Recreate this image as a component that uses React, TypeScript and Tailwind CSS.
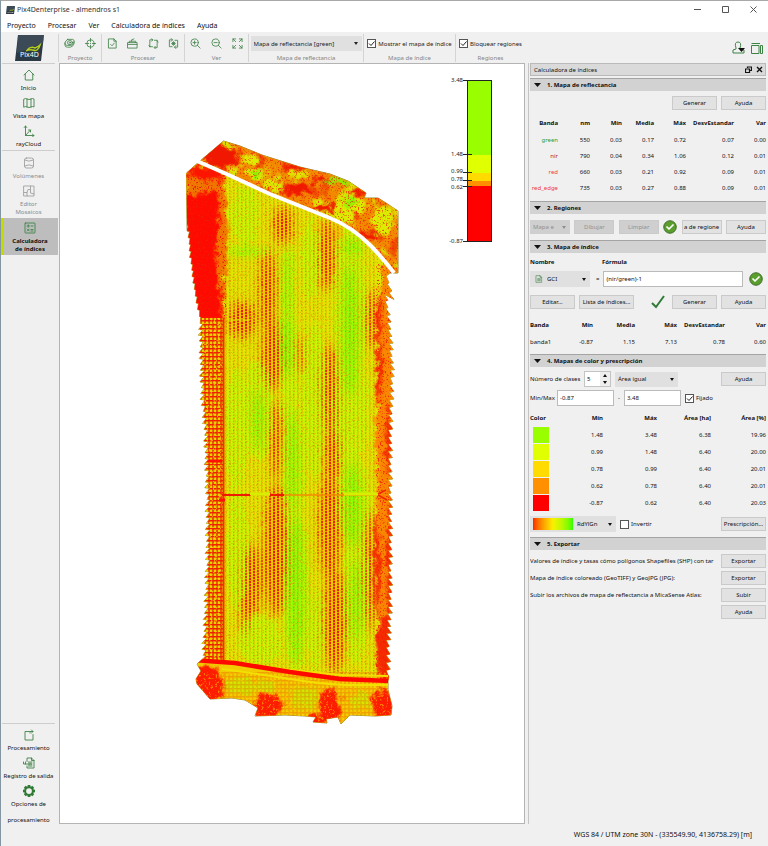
import { useState } from 'react'
import type { ReactNode } from 'react'

type Point = [number, number]

interface BandRow {
  name: string
  color: string
  nm: number
  values: string[]
}

const bands: BandRow[] = [
  { name: 'green', color: 'text-[#2f9a2f]', nm: 550, values: ['0.03', '0.17', '0.72', '0.07', '0.00'] },
  { name: 'nir', color: 'text-[#a8203a]', nm: 790, values: ['0.04', '0.34', '1.06', '0.12', '0.01'] },
  { name: 'red', color: 'text-[#f03838]', nm: 660, values: ['0.03', '0.21', '0.92', '0.09', '0.01'] },
  { name: 'red_edge', color: 'text-[#f03838]', nm: 735, values: ['0.03', '0.27', '0.88', '0.09', '0.01'] },
]

const classes = [
  { swatch: 'bg-[#99ff00]', values: ['1.48', '3.48', '6.38', '19.96'] },
  { swatch: 'bg-[#e0ff00]', values: ['0.99', '1.48', '6.40', '20.00'] },
  { swatch: 'bg-[#ffdb00]', values: ['0.78', '0.99', '6.40', '20.01'] },
  { swatch: 'bg-[#ff9000]', values: ['0.62', '0.78', '6.40', '20.01'] },
  { swatch: 'bg-[#ff0000]', values: ['-0.87', '0.62', '6.40', '20.03'] },
]

const exportsList = [
  { label: 'Valores de índice y tasas cómo polígonos Shapefiles (SHP) con tar', action: 'Exportar' },
  { label: 'Mapa de índice coloreado (GeoTIFF) y GeoJPG (JPG):', action: 'Exportar' },
  { label: 'Subir los archivos de mapa de reflectancia a MicaSense Atlas:', action: 'Subir' },
]

/* ---------- Icons ---------- */

function Icon({ children, className = 'size-3' }: { children: ReactNode; className?: string }) {
  return (
    <svg
      viewBox="0 0 24 24"
      className={`shrink-0 ${className}`}
      fill="none"
      stroke="currentColor"
      strokeWidth="1.800"
      strokeLinejoin="round"
      strokeLinecap="round"
      aria-hidden="true"
    >
      {children}
    </svg>
  )
}

const icons = {
  project: (
    <>
      <path d="M8 3h11q4 1 3 5-1 5-6 8H6q-4-1-4-5 1-5 6-8Z" />
      <path d="M2 11v4q0 5 5 5h7q7-2 8-8V8" />
      <ellipse cx="13" cy="10" rx="5.500" ry="4.500" />
      <circle cx="13" cy="10" r="1.500" />
    </>
  ),
  target: (
    <>
      <circle cx="12" cy="12" r="8" />
      <path d="M12 1v7M12 16v7M1 12h7M16 12h7M12 11.500v1" />
    </>
  ),
  docCheck: (
    <>
      <path d="M4 2h11l5 5v15H4ZM15 2v5h5" />
      <path d="m8 14 3 3 5-6" />
    </>
  ),
  basket: (
    <>
      <path d="M2 10h20v12H2ZM2 14h20" />
      <path d="M5 10V7h14v3M10 7V4l5-2" />
    </>
  ),
  cycle: (
    <>
      <path d="M9 4H4v15M15 21h5V6M4 19l-2-3M4 19h6M20 6l2 3M20 5h-6" />
      <path d="m8 2 3 2-3 3M16 18l-3 3 3 2" />
    </>
  ),
  cyclePlus: (
    <>
      <path d="M9 4H3v15h6M15 20h6V5h-6" />
      <path d="m7 1 3 3-3 3M17 17l-3 3 3 3M12 8v8M8 12h8M9 9l6 6M15 9l-6 6" />
    </>
  ),
  zoomIn: (
    <>
      <circle cx="10" cy="10" r="8" />
      <path d="m16 16 6 6M10 6.500v7M6.500 10h7" />
    </>
  ),
  zoomOut: (
    <>
      <circle cx="10" cy="10" r="8" />
      <path d="m16 16 6 6M6.500 10h7" />
    </>
  ),
  fit: <path d="M2 8V2h6M2 2l6 6M16 2h6v6M22 2l-6 6M2 16v6h6M2 22l6-6M22 16v6h-6M22 22l-6-6" />,
  home: <path d="m2 12 10-10 10 10M4.500 10v12h15V10" />,
  map: <path d="M2 4q3-2 6 0 4 2 8 0 3-2 6 0v16q-3-2-6 0-4 2-8 0-3-2-6 0ZM8 4v16M16 4v16" />,
  axes: (
    <>
      <path d="M5 2v19h17M5 21 15 10" />
      <path d="M2.500 5 5 2l2.500 3M19 18.500l3 2.500-3 2.500M11 10h4v4" />
    </>
  ),
  volume: (
    <>
      <rect x="3" y="2" width="18" height="20" rx="4" />
      <path d="M3 6q9 5 18 0M3 18q9-5 18 0" />
    </>
  ),
  mosaic: (
    <>
      <rect x="2" y="2" width="20" height="20" />
      <path d="M2 15h6l2-6h5V2M15 9v7l7 2M8 15v7" />
    </>
  ),
  calc: (
    <>
      <rect x="2" y="2" width="20" height="20" rx="1" />
      <path d="M6 8h5M8.500 5.500v5M14 8h4M6.500 14l4 4M10.500 14l-4 4M14 15h4M14 18h4" />
    </>
  ),
  process: (
    <>
      <path d="M13 5H4v17h16V11" />
      <path d="M14 8V5h6M17 2l3 3-3 3" />
    </>
  ),
  log: (
    <>
      <path d="M8 9V2h9l5 5v15H8v-4M17 2v5h5" />
      <path d="M11 10h7M11 18h7M1 10v4h17M5 10v4M12 12v4M16 12v4" />
    </>
  ),
  doc: (
    <>
      <path d="M4 2h11l5 5v15H4ZM15 2v5h5" />
      <path d="M8 11h8M8 14h8M8 17h8" />
    </>
  ),
}

function Gear() {
  return (
    <svg viewBox="0 0 24 24" className="size-3" aria-hidden="true">
      <g fill="#2f7a35">
        {[0, 45, 90, 135, 180, 225, 270, 315].map((a) => (
          <path key={a} d="M9.500 0h5l1 5h-7Z" transform={`rotate(${a} 12 12)`} />
        ))}
      </g>
      <circle cx="12" cy="12" r="7.500" fill="none" stroke="#2f7a35" strokeWidth="3.500" />
    </svg>
  )
}

function GreenCheck() {
  return (
    <svg viewBox="0 0 28 28" className="size-3.5 shrink-0" role="img" aria-label="Correcto">
      <circle cx="14" cy="14" r="12.500" fill="#5a9e2e" stroke="#3e6b28" strokeWidth="2" />
      <path d="m8 14 4 4 8-8" fill="none" stroke="#fff" strokeWidth="3.500" strokeLinecap="round" strokeLinejoin="round" />
    </svg>
  )
}

function Logo({ className }: { className: string }) {
  return (
    <svg viewBox="0 0 29 26" className={className} role="img" aria-label="Pix4D">
      <path d="M3 0h26l-3 26H0Z" fill="#2b3944" />
      <path d="M3 0h26l-1 8L2 18Z" fill="#465663" opacity=".6" />
      <path d="M12 15q4-4 8-2 4-2 5-3-2 7-7 5-4-1-7 1" fill="none" stroke="#b4cc20" strokeWidth="1.500" />
      <text x="5" y="22" fontSize="7" fill="#fff" fontFamily="Noto Sans, sans-serif">Pix4D</text>
    </svg>
  )
}

/* ---------- Index map ---------- */

// Sawtooth border between the given points; the teeth lean outwards by `depth`
function sawtooth(points: Point[], step: number, depth: number) {
  const out: string[] = []
  let n = 0
  for (let i = 0; i < points.length - 1; i++) {
    const [x0, y0] = points[i]
    const [x1, y1] = points[i + 1]
    const count = Math.max(1, Math.round(Math.abs(y1 - y0) / step))
    for (let k = 0; k < count; k++) {
      const x = x0 + ((x1 - x0) * k) / count
      const y = y0 + ((y1 - y0) * k) / count
      const reach = depth * (0.7 + 0.5 * Math.abs(Math.sin(n * 2.3)))
      // tip of every tooth sits at its lower end
      if (y1 > y0) {
        out.push(`L${x.toFixed(1)} ${y.toFixed(1)}L${(x + reach).toFixed(1)} ${(y + step - 0.6).toFixed(1)}`)
      } else {
        out.push(`L${x.toFixed(1)} ${y.toFixed(1)}L${(x + reach).toFixed(1)} ${(y - 0.6).toFixed(1)}`)
      }
      n++
    }
  }
  return out.join('')
}

const rightEdge = sawtooth([[386, 276], [389, 293], [384, 294], [388, 330], [390, 370], [389, 400], [388, 430], [388, 600], [386, 640], [386, 678]], 7, 4)
const leftEdge = sawtooth([[206, 656], [208, 620], [210, 560], [210, 500], [208, 430], [205, 400], [203, 330], [203, 318]], 6, -4)
const upperLeftEdge = sawtooth([[201, 317], [196, 290], [192, 258], [189, 225]], 7, -2)

const outline =
  'M186.500 173L200 161L223.500 141L240 146L262 155L300 167L330 174L348 181L366 193L364 198L378 198L386 203L398 211L398 273L390 273' +
  rightEdge +
  'L388 681L388 690L392 706L391 715L375 716L350 715L341 724L338 717L326 719L327 723L313 722L316 717L305 716L285 715L255 716L258 708L245 700L232 698L210 699L197 684L196 679L201 671L197 664' +
  leftEdge +
  upperLeftEdge +
  'L187 224Z'

const plantRows = Array.from({ length: 38 }, (_, i) => 226 + i * 4)

function Blobs({ items }: { items: number[][] }) {
  return (
    <>
      {items.map(([cx, cy, rx, ry], i) => (
        <ellipse key={i} cx={cx} cy={cy} rx={rx} ry={ry} />
      ))}
    </>
  )
}

const limeAreas = [
  [288, 310, 8, 65], [290, 390, 9, 50], [294, 480, 11, 60], [296, 590, 13, 82], [350, 310, 17, 85],
  [352, 247, 13, 9], [350, 410, 18, 60], [353, 500, 16, 46], [356, 590, 13, 75], [250, 251, 24, 5],
  [236, 430, 12, 60], [258, 410, 16, 50], [238, 550, 11, 60], [260, 640, 22, 25], [314, 400, 12, 80], [316, 630, 9, 40],
  [245, 215, 14, 30], [310, 260, 10, 40],
]
const greenAreas = [
  [287, 285, 3, 36], [286, 345, 6, 32], [296, 590, 8, 76], [350, 330, 8, 66], [353, 505, 8, 42], [352, 247, 10, 7],
  [293, 460, 5, 50], [356, 600, 5, 40], [246, 252, 15, 3], [258, 420, 5, 30],
]
const redRowAreas = [
  [268, 290, 8, 42], [283, 225, 10, 18], [272, 355, 10, 36], [327, 255, 8, 36], [330, 390, 8, 46],
  [242, 320, 14, 18], [276, 550, 12, 66], [252, 580, 9, 36], [330, 525, 11, 54], [335, 620, 11, 52], [276, 440, 6, 40],
  [245, 610, 4, 26], [300, 355, 3, 20], [372, 320, 6, 30], [370, 570, 6, 60], [332, 455, 8, 30],
]

function IndexMap() {
  return (
    <svg viewBox="184 138 216 590" className="mt-[74px] h-[590px] w-[216px] shrink-0" role="img" aria-label="Mapa de índice">
      <defs>
        <clipPath id="plot"><path d={outline} /></clipPath>
        <clipPath id="field">
          <path d="M186 165L198 163L230 177L270 195L330 219L355 233L375 251L393 274L400 300V665L388 680L340 679L290 673L235 663L190 660Z" />
        </clipPath>
        <filter id="rough" x="-20%" y="-20%" width="140%" height="140%" colorInterpolationFilters="sRGB">
          <feGaussianBlur stdDeviation="1.500" result="b" />
          <feTurbulence type="fractalNoise" baseFrequency=".12" numOctaves="3" seed="4" result="n" />
          <feDisplacementMap in="b" in2="n" scale="14" xChannelSelector="R" yChannelSelector="G" />
        </filter>
        <filter id="roughSoft" x="-20%" y="-20%" width="140%" height="140%" colorInterpolationFilters="sRGB">
          <feGaussianBlur stdDeviation="4" result="b" />
          <feTurbulence type="fractalNoise" baseFrequency=".25" numOctaves="2" seed="9" result="n" />
          <feDisplacementMap in="b" in2="n" scale="12" xChannelSelector="R" yChannelSelector="G" />
        </filter>
        {/* fine speckles; the last matrix row thresholds the noise into alpha */}
        <filter id="redSpeck" x="0" y="0" width="100%" height="100%" colorInterpolationFilters="sRGB">
          <feTurbulence type="fractalNoise" baseFrequency=".6" numOctaves="2" seed="3" />
          <feColorMatrix type="matrix" values="0 0 0 0 .95  0 0 0 0 .1  0 0 0 0 0  7 0 0 0 -4" />
        </filter>
        <filter id="yellowSpeck" x="0" y="0" width="100%" height="100%" colorInterpolationFilters="sRGB">
          <feTurbulence type="fractalNoise" baseFrequency=".45" numOctaves="2" seed="17" />
          <feColorMatrix type="matrix" values="0 0 0 0 1  0 0 0 0 .85  0 0 0 0 0  7 0 0 0 -4" />
        </filter>
        <filter id="redPatch" x="0" y="0" width="100%" height="100%" colorInterpolationFilters="sRGB">
          <feTurbulence type="fractalNoise" baseFrequency=".06" numOctaves="4" seed="22" />
          <feColorMatrix type="matrix" values="0 0 0 0 .93  0 0 0 0 .12  0 0 0 0 0  5 0 0 0 -2.8" />
        </filter>
        <filter id="yellowPatch" x="0" y="0" width="100%" height="100%" colorInterpolationFilters="sRGB">
          <feTurbulence type="fractalNoise" baseFrequency=".055" numOctaves="4" seed="31" />
          <feColorMatrix type="matrix" values="0 0 0 0 .85  0 0 0 0 .9  0 0 0 0 0  0 6 0 0 -3.3" />
        </filter>
        <pattern id="canopy" width="4" height="3" patternUnits="userSpaceOnUse">
          <rect x="1" y="1" width="1" height="1" fill="#70b800" />
        </pattern>
        <pattern id="redGrid" width="4" height="4" patternUnits="userSpaceOnUse">
          <path d="M0 .8h4M1 0v4" stroke="#f02000" strokeWidth="1.400" />
        </pattern>
        <mask id="redRows" maskUnits="userSpaceOnUse" x="184" y="138" width="216" height="590">
          <rect x="184" y="138" width="216" height="590" fill="#242424" />
          <g fill="#fff" filter="url(#roughSoft)"><Blobs items={redRowAreas} /></g>
        </mask>
      </defs>

      <path d={outline} fill="none" stroke="#7a6a00" strokeWidth=".8" />
      <g clipPath="url(#plot)">
        {/* headland above the road */}
        <rect x="184" y="138" width="216" height="140" fill="#f28a00" />
        <rect x="184" y="138" width="216" height="140" filter="url(#yellowPatch)" />
        <rect x="184" y="138" width="216" height="140" filter="url(#redPatch)" opacity=".6" />
        <g fill="#f01800" filter="url(#rough)">
          <Blobs items={[[220, 156, 17, 11], [298, 190, 16, 5], [295, 167, 14, 3], [325, 208, 12, 4], [360, 192, 10, 3], [366, 236, 16, 3], [322, 180, 7, 4]]} />
        </g>
        <g fill="#dcec00" filter="url(#rough)">
          <Blobs items={[[250, 159, 9, 5], [257, 175, 9, 6], [298, 174, 12, 3], [350, 205, 16, 9], [383, 220, 10, 15], [270, 184, 7, 4], [345, 218, 10, 6]]} />
        </g>
        <g fill="#8cf000" filter="url(#rough)">
          <Blobs items={[[337, 181, 14, 3], [257, 175, 4, 4], [350, 203, 7, 5]]} />
        </g>
        <rect x="184" y="138" width="216" height="140" filter="url(#redSpeck)" opacity=".7" />

        {/* tree rows */}
        <g clipPath="url(#field)">
          <rect x="184" y="150" width="216" height="540" fill="#dde800" />
          <g fill="#f4b400" opacity=".65" filter="url(#roughSoft)">
            <Blobs items={[...redRowAreas, [340, 232, 30, 6]]} />
          </g>
          <g fill="#c4f800" filter="url(#rough)"><Blobs items={limeAreas} /></g>
          <g fill="#84ff00" opacity=".9" filter="url(#roughSoft)"><Blobs items={greenAreas} /></g>
          <rect x="222" y="165" width="166" height="520" fill="url(#canopy)" opacity=".5" />
          <rect x="222" y="165" width="166" height="520" filter="url(#yellowSpeck)" opacity=".4" />
          <g mask="url(#redRows)">
            {plantRows.map((x, i) => (
              <g key={x}>
                <path d={`M${x} 170V680`} stroke="#f04000" strokeWidth="1" opacity=".6" />
                <path d={`M${x} 170V680`} stroke="#e81c00" strokeWidth="2" strokeDasharray="2 1" strokeDashoffset={i % 3} />
              </g>
            ))}
          </g>
          <rect x="222" y="165" width="166" height="520" filter="url(#redSpeck)" opacity=".2" />

          {/* bare strip and left rows */}
          <g filter="url(#rough)">
            <path d="M184 165L205 168L225 178L228 230L224 318H184Z" fill="#f07800" />
            <path d="M184 194L218 192L219 230L215 255L221 300L222 322H184Z" fill="#ff0a00" />
            <path d="M188 165L215 166L226 178L210 182L190 176Z" fill="#ff1400" />
          </g>
          <path d="M184 316.500h38v4H184Z" fill="#ff1400" />
          <rect x="184" y="165" width="42" height="152" filter="url(#redSpeck)" />
          <rect x="196" y="318" width="27" height="345" fill="#e0d400" />
          <rect x="196" y="318" width="27" height="345" fill="url(#redGrid)" />
          <rect x="196" y="318" width="27" height="345" filter="url(#yellowSpeck)" opacity=".7" />
          <path d="M223.500 318V664" stroke="#f03000" strokeWidth="2" />

          {/* right border */}
          <g fill="#f98800" filter="url(#rough)">
            <path d="M382 262L400 270V690H379L377 500L376 420L380 300Z" />
          </g>
          <g fill="#f42c00" filter="url(#rough)">
            <Blobs items={[[379, 320, 3, 22], [379, 370, 3, 30], [389, 440, 3, 34], [377, 565, 3, 50], [390, 570, 3, 80], [385, 650, 8, 34]]} />
          </g>
          <rect x="376" y="262" width="24" height="426" filter="url(#redSpeck)" opacity=".8" />

          {/* tracks */}
          <path d="M226 320h24M296 323h42" stroke="#d8e800" strokeWidth="1.500" opacity=".7" />
          <path d="M222 495h29M270 495h14" stroke="#f01800" strokeWidth="2" />
          <path d="M284 495H376" stroke="#f28a00" strokeWidth="1.600" />
          <path d="M250 494h20M344 494h34" stroke="#d8ee00" strokeWidth="3" />
          <path d="M205 461h17M219 500h6" stroke="#ff1000" strokeWidth="3" />
          <path d="M378 494l8-4M378 495l9 5" stroke="#f02800" strokeWidth="1.500" />
        </g>

        {/* lower headland */}
        <path d="M190 662L235 664L290 674L340 680L392 681V728H190Z" fill="#f0cc00" />
        <g fill="#cfe800" filter="url(#rough)">
          <Blobs items={[[240, 686, 16, 9], [305, 697, 14, 12], [360, 700, 10, 9], [266, 686, 10, 6]]} />
        </g>
        <g fill="#ff1c00" filter="url(#rough)">
          <Blobs items={[[207, 684, 17, 19], [268, 708, 13, 13], [330, 706, 11, 18], [384, 705, 12, 15], [318, 720, 10, 6]]} />
        </g>
        <rect x="190" y="672" width="204" height="56" fill="url(#redGrid)" opacity=".25" />
        <rect x="190" y="672" width="204" height="56" filter="url(#yellowSpeck)" opacity=".5" />
        <path d="M226 660Q260 667 290 670T342 675L388 676M222 669Q260 674 290 679T345 685H390" fill="none" stroke="#f2e000" strokeWidth="2" />
        <path d="M194 660L235 663L290 672L340 679L390 681" fill="none" stroke="#ff0800" strokeWidth="4.500" />
      </g>

      <path d="M197 161L230 175.500L270 194L330 218Q352 227 370 245Q382 257 394 273" fill="none" stroke="#fff" strokeWidth="4" />
    </svg>
  )
}

function Legend() {
  const ticks = [
    { label: '3.48', y: 80, textY: 82 },
    { label: '1.48', y: 154, textY: 156 },
    { label: '0.99', y: 172, textY: 173 },
    { label: '0.78', y: 180, textY: 181 },
    { label: '0.62', y: 186, textY: 189 },
    { label: '-0.87', y: 241, textY: 243 },
  ]
  return (
    <svg viewBox="446 72 48 174" className="mt-2 h-[174px] w-12 shrink-0" role="img" aria-label="Leyenda">
      <rect x="467" y="80" width="25" height="75" fill="#99ff00" />
      <rect x="467" y="155" width="25" height="18" fill="#e0ff00" />
      <rect x="467" y="173" width="25" height="8" fill="#ffdb00" />
      <rect x="467" y="181" width="25" height="5" fill="#ff9000" />
      <rect x="467" y="186" width="25" height="55" fill="#ff0000" />
      <rect x="467.500" y="80.500" width="24" height="161" fill="none" stroke="#222" />
      {ticks.map((t) => (
        <g key={t.label}>
          <path d={`M463 ${t.y + 0.5}h9`} stroke="#222" />
          <text x="463" y={t.textY} textAnchor="end" fontSize="6" fill="#222">{t.label}</text>
        </g>
      ))}
    </svg>
  )
}

/* ---------- Controls ---------- */

function Btn({ children, className = 'w-[45px]', disabled = false }: { children: ReactNode; className?: string; disabled?: boolean }) {
  return (
    <button
      type="button"
      disabled={disabled}
      className={`h-3.5 shrink-0 overflow-hidden border border-[#cacaca] bg-[#e2e2e2] text-center whitespace-nowrap disabled:bg-[#cfcfcf] disabled:text-[#8f8f8f] ${className}`}
    >
      {children}
    </button>
  )
}

interface ComboProps {
  label: string
  value: string
  className: string
  icon?: ReactNode
  disabled?: boolean
}

function Combo({ label, value, className, icon, disabled = false }: ComboProps) {
  return (
    <div className={`relative flex shrink-0 items-center gap-1 pl-[3px] ${disabled ? 'bg-[#cfcfcf] text-[#8f8f8f]' : 'bg-[#e0e0e0]'} ${className}`}>
      {icon}
      <select aria-label={label} disabled={disabled} className="h-full min-w-0 flex-1 appearance-none bg-transparent outline-none">
        <option>{value}</option>
      </select>
      <svg viewBox="0 0 4 3" className="pointer-events-none absolute right-1 h-[3px] w-1" aria-hidden="true">
        <path d="M0 0h4L2 3Z" fill="currentColor" />
      </svg>
    </div>
  )
}

function Check({ label, initial = false }: { label: string; initial?: boolean }) {
  const [checked, setChecked] = useState(initial)
  return (
    <label className="flex shrink-0 items-center gap-0.5 whitespace-nowrap">
      <span className="relative flex size-[9px]">
        <input
          type="checkbox"
          checked={checked}
          onChange={(e) => setChecked(e.target.checked)}
          className="peer size-[9px] appearance-none border border-[#555] bg-white"
        />
        <svg viewBox="0 0 9 9" className="pointer-events-none absolute inset-0 hidden size-[9px] peer-checked:block" aria-hidden="true">
          <path d="m2 4.500 2 2 3.500-4" fill="none" stroke="#222" strokeWidth="1" />
        </svg>
      </span>
      {label}
    </label>
  )
}

function Section({ title, children }: { title: string; children: ReactNode }) {
  const [open, setOpen] = useState(true)
  return (
    <section>
      <h2 className="font-bold">
        <button
          type="button"
          aria-expanded={open}
          onClick={() => setOpen(!open)}
          className="flex h-[13px] w-full items-center gap-1.5 border-t border-[#a4a4a4] bg-[#d2d2d2] pl-1"
        >
          <svg viewBox="0 0 7 4" className="h-1 w-[7px]" aria-hidden="true"><path d="M0 0h7L3.500 4Z" fill="#111" /></svg>
          {title}
        </button>
      </h2>
      {open && children}
    </section>
  )
}

function ToolGroup({ label, className, children }: { label: string; className: string; children: ReactNode }) {
  return (
    <div className={`flex shrink-0 flex-col items-center border-l border-[#d4d4d4] ${className}`}>
      <div className="flex h-5 w-full items-center justify-around text-[#3f8246]">{children}</div>
      <span className="text-[#858585]">{label}</span>
    </div>
  )
}

function ToolButton({ label, icon }: { label: string; icon: ReactNode }) {
  return (
    <button type="button" aria-label={label} className="flex size-4 items-center justify-center">
      <Icon className="size-[11px]">{icon}</Icon>
    </button>
  )
}

function NavItem({ icon, children, disabled = false }: { icon: ReactNode; children: ReactNode; disabled?: boolean }) {
  return (
    <button type="button" disabled={disabled} className="flex w-full flex-col items-center gap-[3px] disabled:text-[#8b8b8b]">
      <span className={disabled ? 'text-[#a0a0a0]' : 'text-[#3f8246]'}>{icon}</span>
      {children}
    </button>
  )
}

/* ---------- Page parts ---------- */

function TitleBar() {
  return (
    <header className="bg-white text-[7px] leading-[9px] text-[#333]">
      <div className="flex h-[17px] items-center pr-[11px] pl-[5px]">
        <Logo className="mr-0.5 h-2 w-[9px]" />
        <h1 className="flex-1">Pix4Denterprise - almendros s1</h1>
        <div className="flex gap-[21px]">
          <button type="button" aria-label="Minimizar"><svg viewBox="0 0 7 7" className="size-[7px]"><path d="M0 3.500h7" stroke="#555" /></svg></button>
          <button type="button" aria-label="Maximizar"><svg viewBox="0 0 7 7" className="size-[7px]"><path d="M.5.500h6v6h-6Z" fill="none" stroke="#555" /></svg></button>
          <button type="button" aria-label="Cerrar"><svg viewBox="0 0 7 7" className="size-[7px]"><path d="m.5.500 6 6m0-6-6 6" stroke="#555" /></svg></button>
        </div>
      </div>
      <nav className="flex h-3.5 items-center gap-3 pl-1.5 text-[#111]">
        <a href="#proyecto">Proyecto</a>
        <a href="#procesar">Procesar</a>
        <a href="#ver">Ver</a>
        <a href="#calculadora">Calculadora de índices</a>
        <a href="#ayuda">Ayuda</a>
      </nav>
    </header>
  )
}

function Toolbar() {
  return (
    <div className="flex h-[31px] items-center">
      <div className="flex w-[57px] shrink-0 justify-center">
        <Logo className="h-[26px] w-[29px]" />
      </div>
      <ToolGroup label="Proyecto" className="w-[43px]">
        <ToolButton label="Abrir proyecto" icon={icons.project} />
        <ToolButton label="Centrar" icon={icons.target} />
      </ToolGroup>
      <ToolGroup label="Procesar" className="w-[83px]">
        <ToolButton label="Informe" icon={icons.docCheck} />
        <ToolButton label="Salida" icon={icons.basket} />
        <ToolButton label="Reprocesar" icon={icons.cycle} />
        <ToolButton label="Optimizar" icon={icons.cyclePlus} />
      </ToolGroup>
      <ToolGroup label="Ver" className="w-[64px]">
        <ToolButton label="Acercar" icon={icons.zoomIn} />
        <ToolButton label="Alejar" icon={icons.zoomOut} />
        <ToolButton label="Ver todo" icon={icons.fit} />
      </ToolGroup>
      <ToolGroup label="Mapa de reflectancia" className="w-[115px]">
        <Combo label="Mapa de reflectancia" value="Mapa de reflectancia [green]" className="h-[15px] w-[111px] text-[#222]" />
      </ToolGroup>
      <ToolGroup label="Mapa de índice" className="w-[92px]">
        <div className="text-[#222]"><Check label="Mostrar el mapa de índice" initial /></div>
      </ToolGroup>
      <ToolGroup label="Regiones" className="w-[70px]">
        <div className="text-[#222]"><Check label="Bloquear regiones" initial /></div>
      </ToolGroup>
      <div className="ml-auto flex items-center gap-1.5 pr-[5px] text-[#3f8246]">
        <button type="button" aria-label="Cuenta">
          <svg viewBox="0 0 13 13" className="size-[13px]" fill="none" stroke="currentColor">
            <path d="M4 7Q2 1 6 1T8 7M4 7v1L1 9v3h11V9L8 8V7" />
            <path d="M6 7h7l-3.500 4Z" fill="#111" stroke="none" />
          </svg>
        </button>
        <button type="button" aria-label="Paneles">
          <svg viewBox="0 0 12 12" className="size-3" fill="none" stroke="currentColor">
            <path d="M.5 3.500h7.500v8H.5ZM.5 1.500h8.500M9.500 3.500h2v8h-2Z" />
          </svg>
        </button>
      </div>
    </div>
  )
}

function Sidebar() {
  return (
    <nav className="flex w-[58px] shrink-0 flex-col text-center">
      <div className="mr-1 ml-px flex flex-col gap-[5px] border-y border-[#cdcdcd] pt-[5px] pb-0.5">
        <NavItem icon={<Icon>{icons.home}</Icon>}><span>Inicio</span></NavItem>
        <NavItem icon={<Icon>{icons.map}</Icon>}><span>Vista mapa</span></NavItem>
        <NavItem icon={<Icon>{icons.axes}</Icon>}><span>rayCloud</span></NavItem>
      </div>
      <div className="mr-1 ml-px flex flex-col gap-[5px] pt-1.5 pb-0.5">
        <NavItem disabled icon={<Icon>{icons.volume}</Icon>}><span>Volúmenes</span></NavItem>
        <NavItem disabled icon={<Icon>{icons.mosaic}</Icon>}><span>Editor<br />Mosaicos</span></NavItem>
      </div>
      <div className="mr-px border-l-3 border-[#c0dc00] bg-[#bdbdbd] pt-1 pr-0.5 pb-0.5 font-bold">
        <NavItem icon={<Icon>{icons.calc}</Icon>}><span>Calculadora<br />de índices</span></NavItem>
      </div>
      <div className="mt-auto mr-1 ml-px flex flex-col gap-[5px] border-t border-[#cdcdcd] pt-[5px]">
        <NavItem icon={<Icon>{icons.process}</Icon>}><span>Procesamiento</span></NavItem>
        <NavItem icon={<Icon>{icons.log}</Icon>}><span>Registro de salida</span></NavItem>
        <NavItem icon={<Gear />}>
          <span className="flex flex-col gap-2"><span>Opciones de</span><span>procesamiento</span></span>
        </NavItem>
      </div>
    </nav>
  )
}

function ReflectanceSection() {
  return (
    <Section title="1. Mapa de reflectancia">
      <div className="flex justify-end gap-1 pt-[5px]">
        <Btn>Generar</Btn>
        <Btn>Ayuda</Btn>
      </div>
      <table className="mt-[3px] mb-[5px] w-full table-fixed text-right">
        <thead>
          <tr className="h-[19px]">
            <th className="w-[28px]">Banda</th>
            <th className="w-8">nm</th>
            <th className="w-8">Mín</th>
            <th className="w-8">Media</th>
            <th className="w-8">Máx</th>
            <th className="w-12 whitespace-nowrap">DesvEstandar</th>
            <th>Var</th>
          </tr>
        </thead>
        <tbody>
          {bands.map((band) => (
            <tr key={band.name} className="h-4">
              <td className={band.color}>{band.name}</td>
              <td>{band.nm}</td>
              {band.values.map((v, i) => <td key={i}>{v}</td>)}
            </tr>
          ))}
        </tbody>
      </table>
    </Section>
  )
}

function RegionsSection() {
  return (
    <Section title="2. Regiones">
      <div className="flex items-center justify-between py-1.5">
        <Combo label="Mapa" value="Mapa e" disabled className="h-3.5 w-10" />
        <Btn disabled className="w-10">Dibujar</Btn>
        <Btn disabled className="w-10">Limpiar</Btn>
        <GreenCheck />
        <Btn className="w-10">a de regione</Btn>
        <Btn className="w-10">Ayuda</Btn>
      </div>
    </Section>
  )
}

function IndexSection() {
  const [formula, setFormula] = useState('(nir/green)-1')
  return (
    <Section title="3. Mapa de índice">
      <div className="flex pt-[5px] font-bold">
        <span className="w-[72px]">Nombre</span>
        <label htmlFor="formula">Fórmula</label>
      </div>
      <div className="flex items-center gap-1.5 pt-[5px] pr-[3px]">
        <Combo
          label="Nombre"
          value="GCI"
          className="h-4 w-[60px]"
          icon={<Icon className="ml-0.5 size-2 text-[#3f8246]">{icons.doc}</Icon>}
        />
        <span className="-mr-0.5">=</span>
        <input
          id="formula"
          value={formula}
          onChange={(e) => setFormula(e.target.value)}
          className="h-4 min-w-0 flex-1 border border-[#bbb] bg-white px-0.5"
        />
        <GreenCheck />
      </div>
      <div className="flex items-center gap-1 pt-2">
        <Btn>Editar...</Btn>
        <Btn className="w-[55px]">Lista de índices...</Btn>
        <svg viewBox="0 0 14 14" className="mr-[3px] ml-auto size-3.5" role="img" aria-label="Válido">
          <path d="m1 8 4 4L13 1" fill="none" stroke="#2f7a35" strokeWidth="2" />
        </svg>
        <Btn>Generar</Btn>
        <Btn>Ayuda</Btn>
      </div>
      <table className="mt-[7px] mb-1 w-full table-fixed text-right">
        <thead>
          <tr className="h-[18px]">
            <th className="w-[28px] text-left">Banda</th>
            <th className="w-[35px]">Mín</th>
            <th className="w-[42px]">Media</th>
            <th className="w-[42px]">Máx</th>
            <th className="w-12 whitespace-nowrap">DesvEstandar</th>
            <th>Var</th>
          </tr>
        </thead>
        <tbody>
          <tr className="h-4">
            <td className="text-left">banda1</td>
            <td>-0.87</td>
            <td>1.15</td>
            <td>7.13</td>
            <td>0.78</td>
            <td>0.60</td>
          </tr>
        </tbody>
      </table>
    </Section>
  )
}

function ColorSection() {
  const [count, setCount] = useState('5')
  return (
    <Section title="4. Mapas de color y prescripción">
      <div className="flex items-center gap-1 pt-1">
        <label htmlFor="count" className="w-[50px] whitespace-nowrap">Número de clases</label>
        <div className="flex h-4 w-[27px] items-center border border-[#c4c4c4] bg-white">
          <input id="count" value={count} onChange={(e) => setCount(e.target.value)} className="w-3 min-w-0 flex-1 px-0.5" />
          <svg viewBox="0 0 10 14" className="h-3.5 w-2.5 bg-[#eee]" aria-hidden="true">
            <path d="M3 5h4L5 2ZM3 9h4l-2 3Z" fill="#111" />
          </svg>
        </div>
        <Combo label="Método" value="Área igual" className="h-[15px] w-[63px]" />
        <Btn className="ml-auto w-[45px]">Ayuda</Btn>
      </div>
      <div className="flex items-center gap-1 pt-[3px]">
        <span className="w-[23px] whitespace-nowrap">Min/Max</span>
        <input aria-label="Mínimo" defaultValue="-0.87" className="h-4 w-[57px] border border-[#bbb] bg-white px-0.5" />
        <span>-</span>
        <input aria-label="Máximo" defaultValue="3.48" className="h-4 w-[57px] border border-[#bbb] bg-white px-0.5" />
        <Check label="Fijado" initial />
      </div>
      <table className="mt-[3px] w-full table-fixed text-right">
        <thead>
          <tr className="h-[17px]">
            <th className="w-[22px] text-left">Color</th>
            <th className="w-[51px]">Mín</th>
            <th className="w-[54px]">Máx</th>
            <th className="w-[54px]">Área [ha]</th>
            <th>Área [%]</th>
          </tr>
        </thead>
        <tbody>
          {classes.map((row) => (
            <tr key={row.swatch} className="h-[17px]">
              <td><div className={`ml-[3px] h-4 w-4 ${row.swatch}`} /></td>
              {row.values.map((v, i) => <td key={i}>{v}</td>)}
            </tr>
          ))}
        </tbody>
      </table>
      <div className="flex items-center gap-1 pt-[5px] pb-[5px]">
        <Combo
          label="Rampa de color"
          value="RdYlGn"
          className="h-4 w-[86px]"
          icon={<span className="h-3 w-10 shrink-0 bg-linear-to-r from-[#ff2000] via-[#f8f000] to-[#20ff00]" />}
        />
        <Check label="Invertir" />
        <Btn className="ml-auto w-[45px]">Prescripción...</Btn>
      </div>
    </Section>
  )
}

function ExportSection() {
  return (
    <Section title="5. Exportar">
      <div className="flex flex-col gap-[3px] pt-1">
        {exportsList.map((item) => (
          <div key={item.label} className="flex items-center justify-between gap-[3px]">
            <span className="overflow-hidden whitespace-nowrap">{item.label}</span>
            <Btn>{item.action}</Btn>
          </div>
        ))}
        <Btn className="w-[45px] self-end">Ayuda</Btn>
      </div>
    </Section>
  )
}

export default function App() {
  return (
    <div className="flex min-h-screen flex-col border-t border-l border-t-[#a8a8a8] border-l-[#8496a2] bg-[#f0f0f0] font-['Noto_Sans',sans-serif] text-[6px] leading-2 text-[#111]">
      <TitleBar />
      <Toolbar />
      <div className="flex flex-1">
        <Sidebar />
        <main className="flex min-w-0 flex-1 items-start justify-between border border-[#b4b4b4] bg-white pr-[30px] pl-[124px]">
          <IndexMap />
          <Legend />
        </main>
        <aside className="ml-[3px] w-[240px] shrink-0 border-l border-[#c4c4c4] pr-0.5 pl-px">
          <div className="mb-0.5 flex h-[13px] items-center gap-1 border border-[#bababa] bg-[#dadada] pr-0.5 pl-[3px]">
            <span className="flex-1">Calculadora de índices</span>
            <button type="button" aria-label="Desacoplar">
              <svg viewBox="0 0 7 7" className="size-[7px]"><path d="M2.500 2V1h4v3.500h-2M.5 3h4v3.500h-4Z" fill="none" stroke="#111" strokeWidth="1.200" /></svg>
            </button>
            <button type="button" aria-label="Cerrar panel">
              <svg viewBox="0 0 7 7" className="size-[7px]"><path d="m1 1 5 5m0-5-5 5" stroke="#111" strokeWidth="1.400" /></svg>
            </button>
          </div>
          <ReflectanceSection />
          <RegionsSection />
          <IndexSection />
          <ColorSection />
          <ExportSection />
        </aside>
      </div>
      <footer className="flex h-[22px] items-center justify-end pr-4 text-[7px]">
        WGS 84 / UTM zone 30N - (335549.90, 4136758.29) [m]
      </footer>
    </div>
  )
}
